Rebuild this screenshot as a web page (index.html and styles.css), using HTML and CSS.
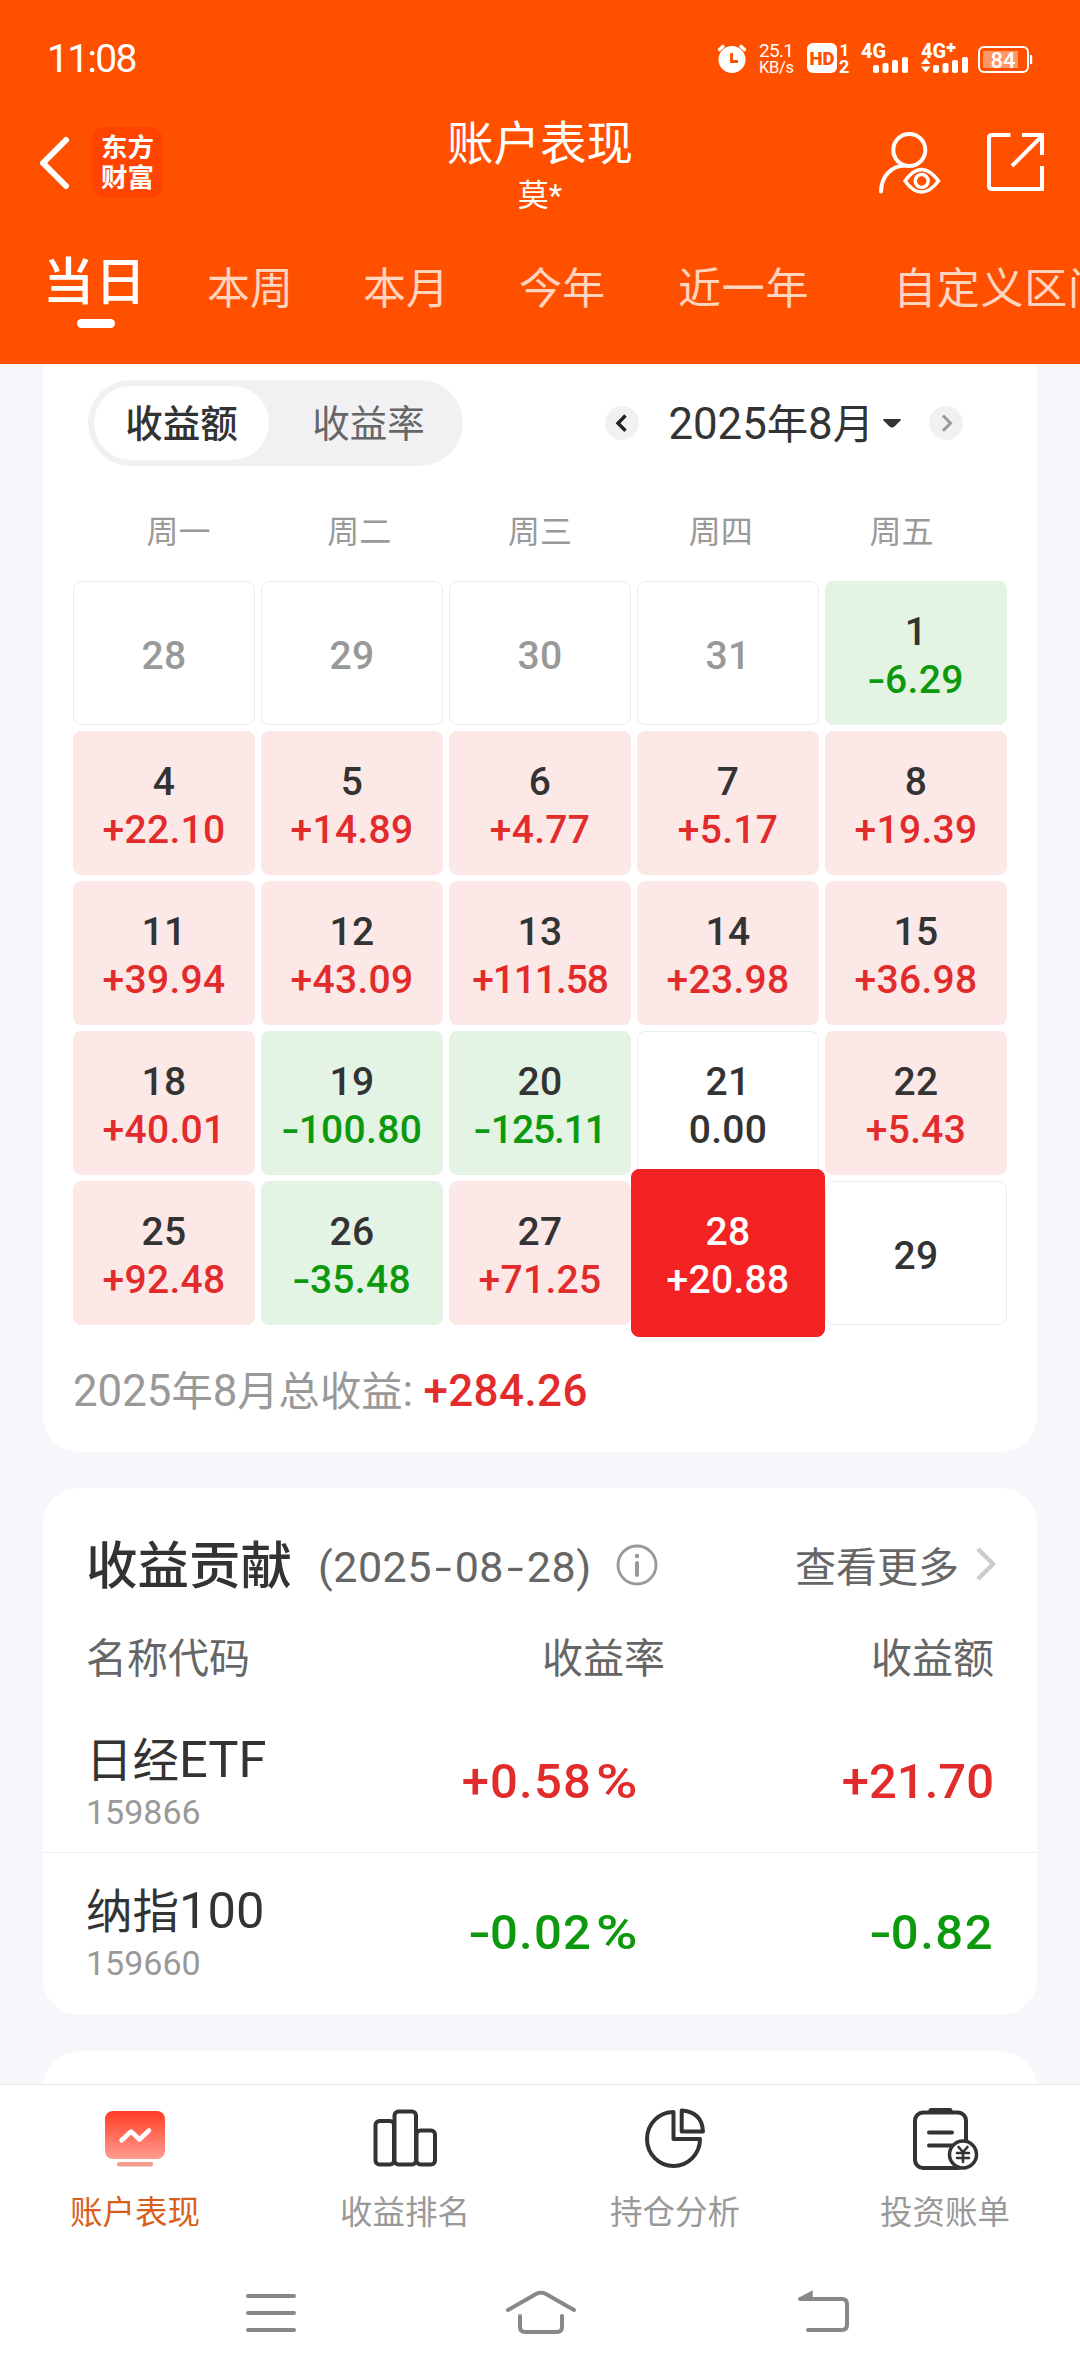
FILE: index.html
```html
<!DOCTYPE html>
<html lang="zh-CN">
<head>
<meta charset="utf-8">
<title>账户表现</title>
<link rel="stylesheet" href="styles.css">
</head>
<body>
<div class="screen">
  <header class="header">
    <div class="status">
      <time class="clock">11:08</time>
      <svg class="status-icons" viewBox="712 36 324 44" width="324" height="44" fill="#fff">
        <circle cx="732" cy="59.500" r="13.500"/>
        <path d="M718.500 50.500l5.500-5M745.500 50.500l-5.500-5" stroke="#fff" stroke-width="3.2"/>
        <path d="M731.500 53v8.500h6.500" fill="none" stroke="#ff5000" stroke-width="2.800"/>
        <text x="759" y="57" font-size="19" textLength="35">25.1</text>
        <text x="759" y="73" font-size="16.500" textLength="35">KB/s</text>
        <rect x="807" y="43" width="30" height="30" rx="6"/>
        <text x="809.500" y="65" font-size="19" font-weight="900" fill="#ff5000" textLength="25" lengthAdjust="spacingAndGlyphs">HD</text>
        <text x="839.500" y="55.500" font-size="17" font-weight="700">1</text>
        <text x="839" y="73" font-size="18" font-weight="700">2</text>
        <text x="861" y="58" font-size="20" font-weight="800" textLength="25" lengthAdjust="spacingAndGlyphs">4G</text>
        <rect x="873" y="65" width="6" height="8" rx="2"/><rect x="882.500" y="63" width="6" height="10" rx="2"/><rect x="892" y="60" width="6" height="13" rx="2"/><rect x="902" y="57" width="6" height="16" rx="2"/>
        <text x="921" y="58" font-size="20" font-weight="800" textLength="25" lengthAdjust="spacingAndGlyphs">4G</text>
        <path d="M946.500 47.500h9M951 43v9" stroke="#fff" stroke-width="2.800"/>
        <path d="M921 64l4.800-6 4.800 6zM921 66.500l4.800 6 4.800-6z"/>
        <rect x="933" y="65" width="6" height="8" rx="2"/><rect x="942.500" y="63" width="6" height="10" rx="2"/><rect x="952" y="60" width="6" height="13" rx="2"/><rect x="962" y="57" width="6" height="16" rx="2"/>
        <rect x="979" y="47" width="49" height="25" rx="5" fill="none" stroke="#fff" stroke-width="2"/>
        <rect x="983" y="51" width="35" height="17" fill-opacity=".4"/>
        <rect x="1030" y="55" width="2.200" height="9"/>
        <text x="990.500" y="68" font-size="22" font-weight="500">84</text>
      </svg>
    </div>
    <div class="titlebar">
      <div class="title-left">
        <svg viewBox="38 133 34 60" width="34" height="60" fill="none" stroke="#fff" stroke-width="6" stroke-linecap="round" stroke-linejoin="round"><path d="M66 140L43 163l23 23"/></svg>
        <div class="logo"><span>东方</span><span>财富</span></div>
      </div>
      <div class="title-mid"><h1>账户表现</h1><p>莫*</p></div>
      <div class="title-right">
        <svg viewBox="876 128 66 68" width="66" height="68" fill="none" stroke="#fff" stroke-width="4" stroke-linecap="round">
          <circle cx="909.300" cy="149" r="16"/>
          <path d="M881 190.500C881.500 175 891 165 905 164.500"/>
          <path d="M905 180Q913 168.500 921.500 168.500T938.500 180Q930 191 921.500 191T905 180z" stroke-width="3.500"/>
          <circle cx="921.700" cy="180" r="6.500" stroke-width="3.500"/>
        </svg>
        <svg viewBox="984 129 63 66" width="63" height="66" fill="none" stroke="#fff" stroke-width="4"><path d="M1010.500 135H992q-3 0-3 3v48q0 3 3 3h50v-23M1022 135h20v20M1042 136l-30 30"/></svg>
      </div>
    </div>
    <nav class="tabs">
      <span class="tab tab-on">当日</span><span class="tab">本周</span><span class="tab">本月</span><span class="tab">今年</span><span class="tab tab-year">近一年</span><span class="tab tab-custom">自定义区间</span>
    </nav>
  </header>

  <main class="content">
    <section class="card calendar">
      <div class="cal-head">
        <div class="segment"><span class="seg seg-on">收益额</span><span class="seg">收益率</span></div>
        <div class="month">
          <span class="round"><svg viewBox="0 0 34 34" width="34" height="34" fill="none" stroke="#222" stroke-width="3.400"><path d="M20.500 9.500L13 17.200l7.500 7.500"/></svg></span>
          <span class="month-name"><b class="n">2025</b>年<b class="n">8</b>月</span>
          <svg class="caret" viewBox="0 0 18 9" width="18" height="9" fill="#333"><path d="M1 0h16q1.500 0 .5 1.500L11.500 7.500Q9 9.500 6.500 7.500L.5 1.500Q-.5 0 1 0z"/></svg>
          <span class="round"><svg viewBox="0 0 34 34" width="34" height="34" fill="none" stroke="#999" stroke-width="3"><path d="M14 9.500l7.500 7.700-7.500 7.500"/></svg></span>
        </div>
      </div>
      <div class="week"><span>周一</span><span>周二</span><span>周三</span><span>周四</span><span>周五</span></div>
      <div class="days">
        <div class="day out">28</div><div class="day out">29</div><div class="day out">30</div><div class="day out">31</div>
        <div class="day down">1<em><i>-</i>6.29</em></div>
        <div class="day up">4<em>+22.10</em></div><div class="day up">5<em>+14.89</em></div><div class="day up">6<em>+4.77</em></div><div class="day up">7<em>+5.17</em></div><div class="day up">8<em>+19.39</em></div>
        <div class="day up">11<em>+39.94</em></div><div class="day up">12<em>+43.09</em></div><div class="day up">13<em class="tight">+111.58</em></div><div class="day up">14<em>+23.98</em></div><div class="day up">15<em>+36.98</em></div>
        <div class="day up">18<em>+40.01</em></div><div class="day down">19<em><i>-</i>100.80</em></div><div class="day down">20<em class="tight"><i>-</i>125.11</em></div><div class="day">21<em>0.00</em></div><div class="day up">22<em>+5.43</em></div>
        <div class="day up">25<em>+92.48</em></div><div class="day down">26<em><i>-</i>35.48</em></div><div class="day up">27<em>+71.25</em></div><div class="day selected">28<em>+20.88</em></div><div class="day">29</div>
      </div>
      <p class="total"><b class="n">2025</b>年<b class="n">8</b>月总收益<b class="n">:</b> <strong>+284.26</strong></p>
    </section>

    <section class="card contrib">
      <div class="contrib-head">
        <h2>收益贡献</h2>
        <span class="date">(2025<i>-</i>08<i>-</i>28)</span>
        <svg class="info" viewBox="0 0 42 42" width="42" height="42" fill="none" stroke="#999" stroke-width="2.800"><circle cx="21" cy="21" r="19"/><path d="M21 19v12" stroke-width="4" stroke-linecap="round"/><circle cx="21" cy="12" r="2.200" fill="#999" stroke="none"/></svg>
        <span class="more">查看更多</span>
        <svg class="chevron" viewBox="0 0 24 36" width="24" height="36" fill="none" stroke="#ccc" stroke-width="4.500"><path d="M4 3l15 15L4 33"/></svg>
      </div>
      <div class="row labels"><span>名称代码</span><span>收益率</span><span>收益额</span></div>
      <div class="row item">
        <div class="name">日经<b class="n">ETF</b><small>159866</small></div><span class="rate red">+0.58<b class="pct">%</b></span><span class="red">+21.70</span>
      </div>
      <div class="row item second">
        <div class="name">纳指<b class="n">100</b><small>159660</small></div><span class="rate green"><i>-</i>0.02<b class="pct">%</b></span><span class="amount green"><i>-</i>0.82</span>
      </div>
    </section>
    <section class="card next"></section>
  </main>

  <nav class="tabbar">
    <a class="on">
      <svg viewBox="100 2104 70 70" width="70" height="70">
        <defs><linearGradient id="glow" x1="0" y1="0" x2="0" y2="1"><stop offset="0" stop-color="#ff3c24"/><stop offset="1" stop-color="#ff9d90"/></linearGradient></defs>
        <rect x="105" y="2111" width="60" height="48" rx="8" fill="url(#glow)"/>
        <path d="M121.500 2140.500l9.500-9 8.500 8 9.500-9" fill="none" stroke="#fff" stroke-width="4.500" stroke-linecap="round" stroke-linejoin="round"/>
        <rect x="117" y="2162" width="36" height="4.500" rx="2.250" fill="#f59b90"/>
      </svg>账户表现</a>
    <a>
      <svg viewBox="370 2104 70 70" width="70" height="70" fill="none" stroke="#333" stroke-width="4"><rect x="375.500" y="2121" width="18.500" height="43.500" rx="4"/><rect x="394.500" y="2111.500" width="21.500" height="53" rx="4"/><rect x="416.500" y="2130.500" width="18.500" height="34" rx="4"/></svg>收益排名</a>
    <a>
      <svg viewBox="640 2104 70 70" width="70" height="70" fill="none" stroke="#333" stroke-width="4" stroke-linejoin="round"><path d="M673.500 2112A26.500 27 0 1 0 700 2139h-26.500z"/><path d="M681.700 2110.500v21h21.300q-1-19.500-21.300-21z"/></svg>持仓分析</a>
    <a>
      <svg viewBox="910 2104 70 70" width="70" height="70" fill="none" stroke="#333" stroke-width="4" stroke-linecap="round"><rect x="915" y="2112.500" width="51" height="55.500" rx="8"/><path d="M931 2110.500h19" stroke-width="5"/><path d="M929 2132.500h23M929 2145.500h23"/><circle cx="963" cy="2154.500" r="13.500" fill="#fff" stroke-width="3.500"/><path d="M958.500 2147l4.500 5 4.500-5M963 2152v10M957 2153h12M957 2158h12" stroke-width="2.600"/></svg>投资账单</a>
  </nav>

  <footer class="sysnav">
    <svg viewBox="236 2282 70 60" width="70" height="60" fill="none" stroke="#888" stroke-width="4" stroke-linecap="round"><path d="M248 2296h46M248 2313h46M248 2330h46"/></svg>
    <svg viewBox="501 2282 80 60" width="80" height="60" fill="none" stroke="#888" stroke-width="4" stroke-linecap="round"><path d="M508 2310l28-16q5-2.500 10 0l28 16M520 2316v11q0 5 5 5h32q5 0 5-5v-11"/></svg>
    <svg viewBox="790 2282 70 60" width="70" height="60" fill="none" stroke="#888" stroke-width="4" stroke-linecap="round"><path d="M800 2299h42q5 0 5 5v21q0 5-5 5h-34"/><path d="M799 2298.500l13-7v7z" fill="#888" stroke-width="1.500"/></svg>
  </footer>
</div>
</body>
</html>
```
FILE: styles.css
```css
* { box-sizing: border-box; }
body, h1, h2, p { margin: 0; }
body { background: #f6f7fa; color: #333; font-family: Roboto, "Noto Sans CJK SC", sans-serif; }
svg { display: block; flex: none; }
em, i { font-style: normal; }
.n { font-weight: inherit; font-size: 1.06em; }
/* widened minus sign */
i { display: inline-block; transform: scaleX(1.35); width: .43em; text-align: center; letter-spacing: 0; }

.screen { width: 1080px; height: 2376px; display: flex; flex-direction: column; overflow: hidden; }

.header { height: 364px; flex: none; background: #ff5000; color: #fff; display: flex; flex-direction: column; }
.status { height: 116px; padding: 36px 44px 0 47px; display: flex; justify-content: space-between; align-items: flex-start; }
.clock { font-size: 39px; line-height: 46px; letter-spacing: -1.7px; }
.titlebar { height: 100px; display: grid; grid-template-columns: 1fr auto 1fr; align-items: start; }
.title-left { display: flex; align-items: center; gap: 20px; padding: 11px 0 0 38px; }
.logo { width: 71px; height: 71px; border-radius: 13px; background: #ff4400; display: flex; flex-direction: column; align-items: center; justify-content: center; font-size: 26.500px; line-height: 30px; font-weight: 700; }
.title-mid { text-align: center; }
.title-mid h1 { font-size: 46.500px; line-height: 56px; font-weight: 400; }
.title-mid p { font-size: 31px; line-height: 40px; margin-top: 4px; }
.title-right { display: flex; justify-content: flex-end; gap: 42px; padding: 13px 33px 0 0; }
.tabs { display: flex; align-items: flex-start; padding: 40px 0 0 43px; white-space: nowrap; overflow: hidden; height: 148px; }
.tab { font-size: 43px; line-height: 66px; color: #ffd5c0; margin-right: 70px; }
.tab-on { font-size: 51px; line-height: 53px; font-weight: 500; color: #fff; margin-right: 60px; letter-spacing: 1px; display: flex; flex-direction: column; align-items: center; }
.tab-on::after { content: ""; width: 38px; height: 9px; border-radius: 5px; background: #fff; margin: 10px 0 0 1px; }
.tab-year { margin: 0 84px 0 3px; letter-spacing: .7px; }
.tab-custom { margin: 0; letter-spacing: .7px; }

.content { height: 1720px; flex: none; overflow: hidden; padding: 0 43px; display: flex; flex-direction: column; gap: 36px; }
.card { background: #fff; border-radius: 36px; flex: none; }
.calendar { height: 1088px; border-radius: 0 0 36px 36px; padding: 16px 30px 0; }
.cal-head { display: flex; align-items: center; justify-content: space-between; height: 86px; padding: 0 44px 0 15px; }
.segment { display: flex; width: 375px; height: 86px; padding: 6px; border-radius: 43px; background: #f1f1f4; }
.seg { width: 175px; height: 74px; line-height: 77px; text-align: center; font-size: 37.500px; color: #666; border-radius: 37px; }
.seg + .seg { margin-left: 12px; }
.seg-on { background: #fff; color: #333; font-weight: 500; }
.month { display: flex; align-items: center; }
.round { width: 34px; height: 34px; border-radius: 50%; background: #f1f1f4; }
.month-name { font-size: 41.300px; line-height: 60px; margin: 3px 9px 0 29px; white-space: nowrap; }
.caret { margin-right: 28px; }
.week { display: grid; grid-template-columns: repeat(5, 1fr); padding: 0 15px; margin-top: 45px; height: 70px; line-height: 42px; font-size: 32px; color: #999; text-align: center; }
.days { display: grid; grid-template-columns: repeat(5, 182px); grid-auto-rows: 144px; gap: 6px; }
.day { border: 1px solid #ececec; border-radius: 8px; padding-top: 5px; display: flex; flex-direction: column; align-items: center; justify-content: center; font-size: 39px; line-height: 48px; font-weight: 500; letter-spacing: .3px; }
.up { background: #fde8e8; border-color: #fde8e8; }
.down { background: #e3f4e5; border-color: #e3f4e5; }
.up em, .red, .total strong { color: #e22c2c; }
.down em, .green { color: #0d990d; }
.out { color: #999; }
.tight { letter-spacing: -1.1px; }
.selected { margin: -12px -6px; background: #f42323; border-color: #f42323; color: #fff; z-index: 1; }
.total { font-size: 41.300px; line-height: 60px; margin-top: 36px; color: #999; white-space: nowrap; }
.total strong { font-size: 44px; font-weight: 500; letter-spacing: .4px; }

.contrib { height: 527px; }
.contrib-head { height: 102px; display: flex; align-items: center; padding: 54px 39px 0 43px; }
h2 { font-size: 51.500px; line-height: 60px; font-weight: 500; margin-top: 2px; }
.date { font-size: 43px; color: #666; margin: 2px 0 0 26px; white-space: nowrap; letter-spacing: .5px; }
.date i { width: .53em; transform: scaleX(1.4); }
.info { margin: -3px 0 0 24px; }
.more { font-size: 41px; color: #666; margin: -5px 15px 0 auto; }
.chevron { margin-top: -5px; }
.row { display: grid; grid-template-columns: 300px 279px 1fr; padding: 0 43px; align-items: center; }
.row > span { text-align: right; }
.labels { height: 80px; margin-top: 25px; font-size: 41px; color: #666; margin-bottom: 13px; }
.labels span:first-child { text-align: left; }
.item { height: 145px; border-bottom: 1px solid #eee; font-size: 49px; font-weight: 500; }
.item.second { border: 0; height: 157px; }
.item > span { padding-top: 2px; }
.row > .rate { letter-spacing: 1.200px; padding-right: 25px; }
.pct { display: inline-block; font-weight: 500; width: 44px; margin-left: 4px; letter-spacing: 0; transform: scaleX(1.15); transform-origin: left; text-align: left; }
.amount { letter-spacing: 1.500px; }
.name { font-size: 46.500px; line-height: 54px; font-weight: 400; padding-top: 8px; white-space: nowrap; }
.name .n { font-size: 1.09em; }
.name small { display: block; font-size: 34px; line-height: 48px; color: #999; }
.next { height: 200px; border-radius: 36px; }

.tabbar { height: 176px; flex: none; background: #fff; border-top: 1px solid #e8e8e8; display: grid; grid-template-columns: repeat(4, 1fr); }
.tabbar a { display: flex; flex-direction: column; align-items: center; padding-top: 19px; font-size: 32.500px; line-height: 44px; color: #999; }
.tabbar svg { margin-bottom: 17px; }
.tabbar .on { color: #d9601a; }
.sysnav { flex: 1; background: #fff; display: grid; grid-template-columns: 265px 289px 70px; padding: 22px 0 0 236px; }
```
